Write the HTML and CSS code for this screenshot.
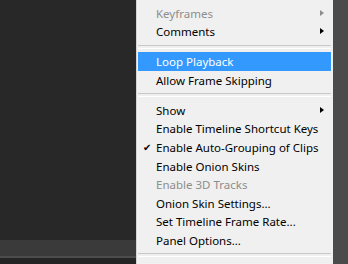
FILE: index.html
```html
<!DOCTYPE html>
<html lang="en">
<head>
    <meta charset="UTF-8">
    <title>Timeline Panel Menu</title>
    <link rel="stylesheet" href="styles.css">
</head>
<body>
    <div class="workspace">
        <div class="canvas"></div>
        <div class="track-bar"></div>
        <div class="track-edge"></div>
        <div class="track-below"></div>
    </div>

    <ul class="menu">
        <li class="item disabled has-sub">Keyframes</li>
        <li class="item has-sub">Comments</li>
        <li class="sep"></li>
        <li class="item active">Loop Playback</li>
        <li class="item">Allow Frame Skipping</li>
        <li class="sep"></li>
        <li class="item has-sub">Show</li>
        <li class="item">Enable Timeline Shortcut Keys</li>
        <li class="item checked">Enable Auto-Grouping of Clips</li>
        <li class="item">Enable Onion Skins</li>
        <li class="item disabled">Enable 3D Tracks</li>
        <li class="item">Onion Skin Settings...</li>
        <li class="item">Set Timeline Frame Rate...</li>
        <li class="item">Panel Options...</li>
        <li class="sep"></li>
    </ul>

    <div class="side"></div>
</body>
</html>
```

FILE: styles.css
```css
* {
    margin: 0;
    padding: 0;
    box-sizing: border-box;
}

body {
    display: flex;
    width: 348px;
    height: 264px;
    overflow: hidden;
    background: #282828;
    font-family: 'Noto Sans', 'Open Sans', sans-serif;
    font-size: 11.5px;
}

.workspace {
    width: 136px;
    display: flex;
    flex-direction: column;
}

.canvas {
    flex: 1;
    background: #282828;
}

.track-bar {
    height: 16px;
    background: #3a3a3a;
}

.track-edge {
    height: 2px;
    background: #4c4c4c;
}

.track-below {
    height: 6px;
    background: #242424;
}

.menu {
    width: 197px;
    list-style: none;
    background: #f0f0f0;
    border-left: 1px solid #d4d4d4;
    padding: 3.7px 2px 0 1px;
    color: #000;
}

.item {
    position: relative;
    height: 18.6px;
    line-height: 20px;
    padding-left: 18px;
    white-space: nowrap;
}

.item.disabled {
    color: #8d8d8d;
}

.item.active {
    background: #3399ff;
    color: #fff;
}

.item.has-sub::after {
    content: "";
    position: absolute;
    right: 7px;
    top: 6px;
    border-top: 3.5px solid transparent;
    border-bottom: 3.5px solid transparent;
    border-left: 4px solid #000;
}

.item.disabled.has-sub::after {
    border-left-color: #8d8d8d;
}

.item.checked::before {
    content: "\2714";
    position: absolute;
    left: 5px;
    top: 0;
    font-family: 'DejaVu Sans', sans-serif;
    font-size: 10px;
}

.sep {
    height: 11.4px;
    display: flex;
    align-items: center;
}

.sep::before {
    content: "";
    display: block;
    width: 100%;
    height: 2px;
    border-top: 1px solid #c8c8c8;
    border-bottom: 1px solid #ffffff;
}

.side {
    flex: 1;
    background: #4b4b4b;
}
```
